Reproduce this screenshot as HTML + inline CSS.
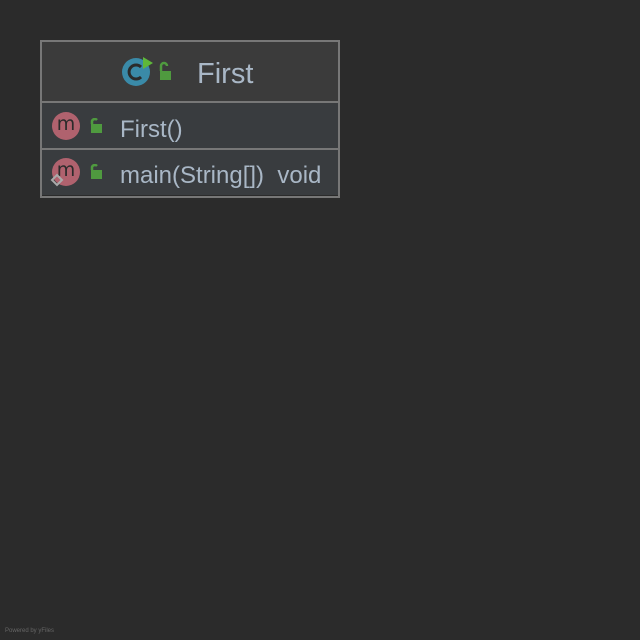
<!DOCTYPE html><html><head><style>
body{margin:0;width:640px;height:640px;background:#2b2b2b;position:relative;font-family:"Liberation Sans",sans-serif;color:#a9b7c6;overflow:hidden}
.box{position:absolute;left:40px;top:40px;width:296px;height:154px;border:2px solid #777}
.hdr{position:absolute;left:0;top:0;width:296px;height:59px;background:#3b3b3b}
.r{position:absolute;left:0;width:296px;height:45px;background:#393c3f}
.ln{position:absolute;left:0;width:296px;height:2px;background:#777}
.t{position:absolute;white-space:nowrap}
.m{position:absolute;width:28px;height:28px;border-radius:50%;background:#b0626e;color:#2b2b2b;font-family:"DejaVu Sans",sans-serif;font-size:19px;text-align:center;line-height:25px}
</style></head><body>
<div class="box">
<div class="hdr">
<svg style="position:absolute;left:80px;top:12px" width="56" height="34">
<circle cx="14" cy="18" r="14" fill="#3a8aa8"/>
<path d="M19 13 A7 7 0 1 0 19 23" stroke="#2b2b2b" stroke-width="3" fill="none"/>
<path d="M21 3 L31 9 L21 15 Z" fill="#5fb83a"/>
<rect x="38" y="17" width="11" height="9" fill="#4f9a3f"/>
<path d="M39 17 V12 A3 3 0 0 1 45 12" stroke="#4f9a3f" stroke-width="2.5" fill="none"/>
</svg>
<div class="t" style="left:155px;top:16px;font-size:29px">First</div>
</div>
<div class="ln" style="top:59px"></div>
<div class="r" style="top:61px"></div>
<div class="ln" style="top:106px"></div>
<div class="r" style="top:108px"></div>
<div class="m" style="left:10px;top:70px">m</div>
<svg style="position:absolute;left:46px;top:76px" width="16" height="16"><rect x="3" y="6" width="11" height="9" fill="#4f9a3f"/><path d="M4 6 V3 A3 3 0 0 1 9 2" stroke="#4f9a3f" stroke-width="2.5" fill="none"/></svg>
<div class="t" style="left:78px;top:74px;font-size:24px">First()</div>
<div class="m" style="left:10px;top:116px">m</div>
<svg style="position:absolute;left:8px;top:131px" width="14" height="14"><path d="M7 2 L12 7 L7 12 L2 7 Z" fill="none" stroke="#aaa" stroke-width="2"/></svg>
<svg style="position:absolute;left:46px;top:122px" width="16" height="16"><rect x="3" y="6" width="11" height="9" fill="#4f9a3f"/><path d="M4 6 V3 A3 3 0 0 1 9 2" stroke="#4f9a3f" stroke-width="2.5" fill="none"/></svg>
<div class="t" style="left:78px;top:120px;font-size:24px">main(String[])&nbsp;&nbsp;void</div>
</div>
<div class="t" style="left:5px;top:628px;font-size:6px;color:#666">Powered by yFiles</div>
</body></html>
